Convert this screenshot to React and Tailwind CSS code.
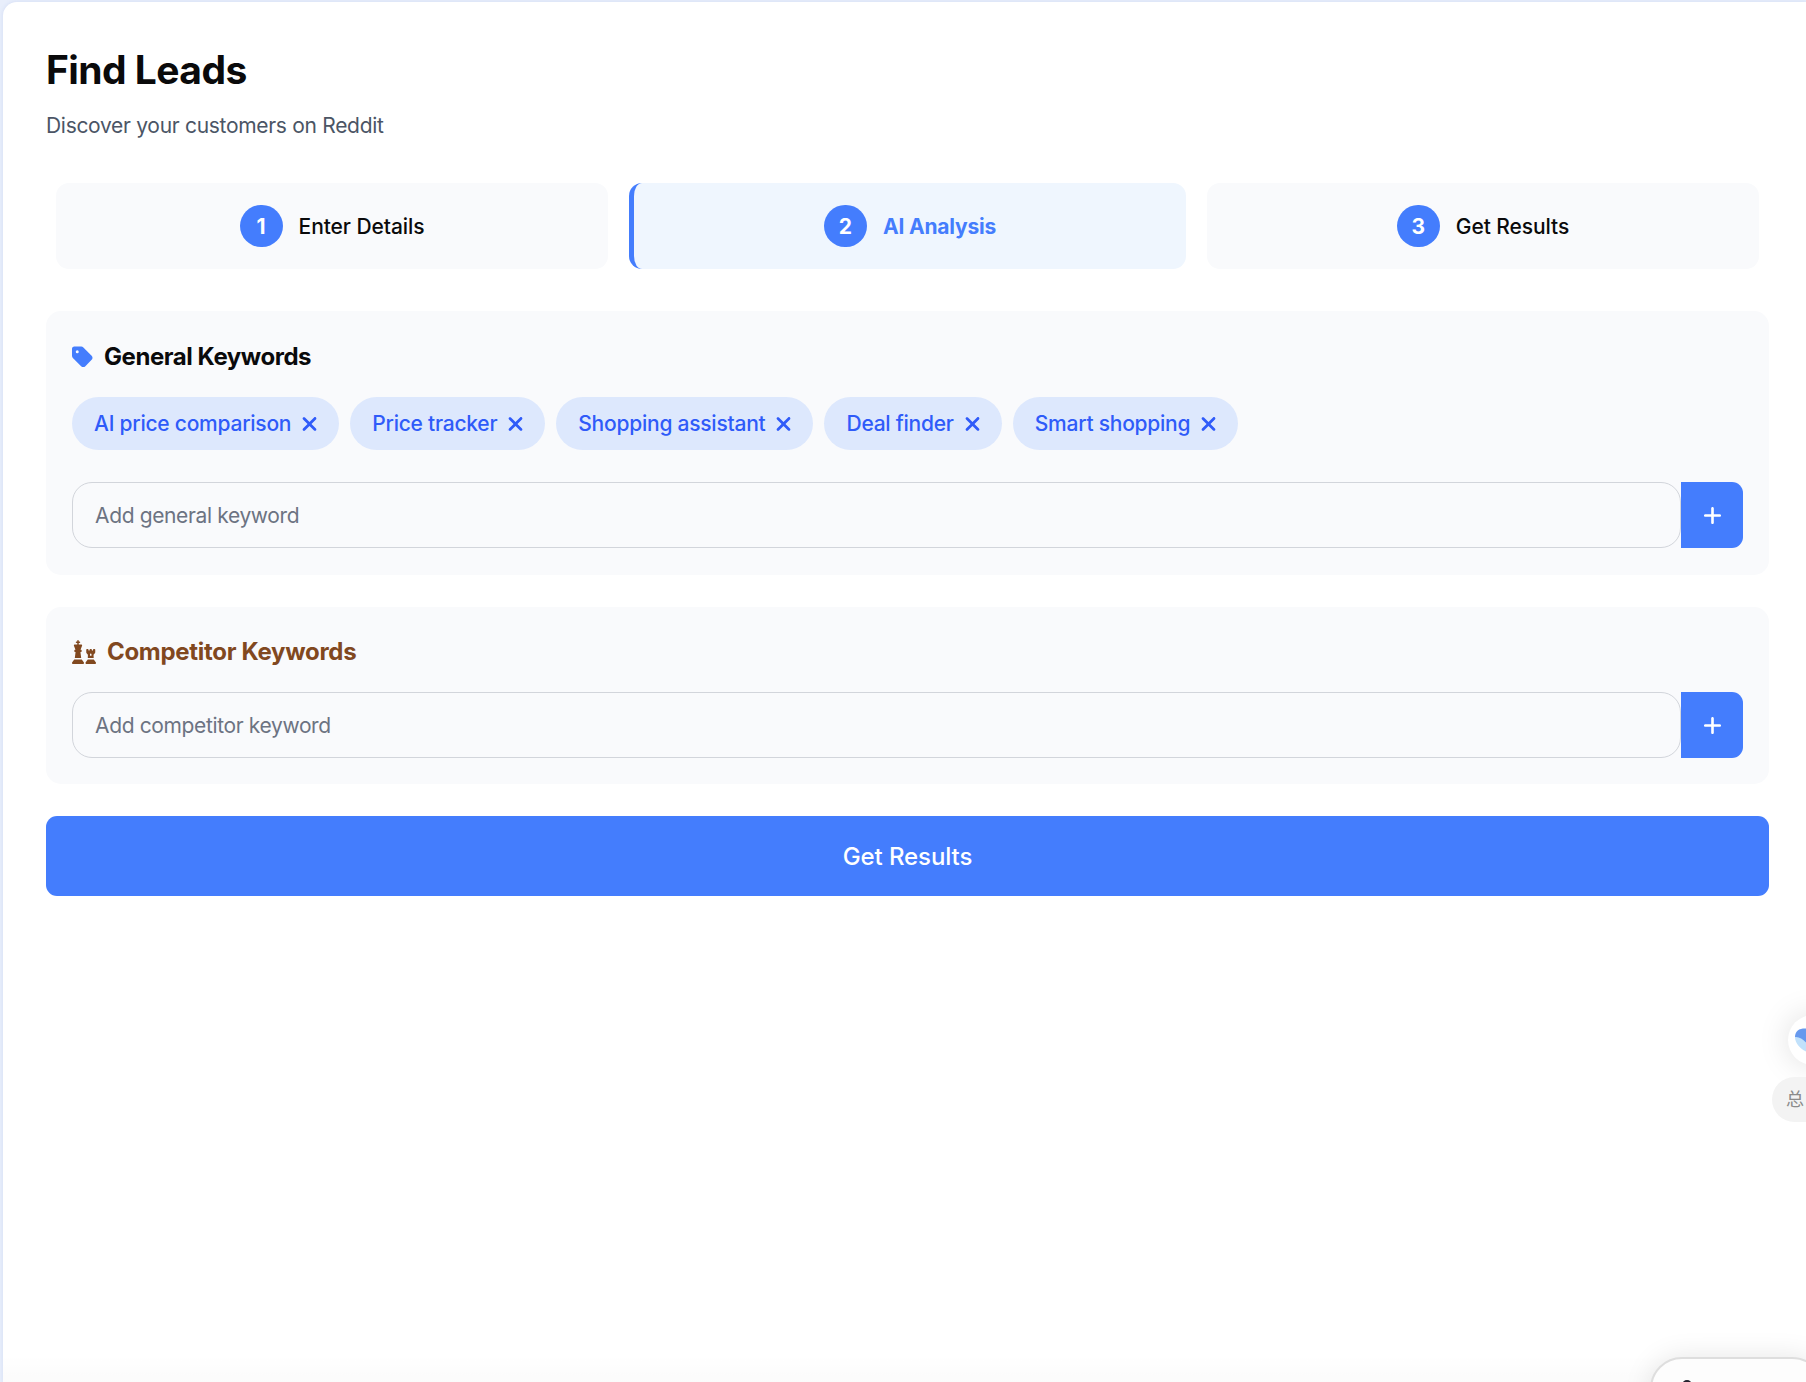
import { FaTag, FaPlus, FaXmark, FaChess } from 'react-icons/fa6'
import clsx from 'clsx'

const STEPS = [
  { id: 1, label: 'Enter Details' },
  { id: 2, label: 'AI Analysis' },
  { id: 3, label: 'Get Results' },
]

const CURRENT_STEP = 2

const GENERAL_KEYWORDS = [
  'AI price comparison',
  'Price tracker',
  'Shopping assistant',
  'Deal finder',
  'Smart shopping',
]

function Step({ id, label }) {
  const active = id === CURRENT_STEP
  return (
    <div
      className={clsx(
        'flex h-[86px] items-center justify-center gap-4 rounded-[13px]',
        active ? 'w-[557px] border-l-[5px] border-[#447dfd] bg-[#eff6fe]' : 'w-[552px] bg-[#f9fafc]'
      )}
    >
      <span className="flex h-[42px] w-[43px] items-center justify-center rounded-full bg-[#447dfd] pt-px text-[21px] font-bold text-white">
        {id}
      </span>
      <span
        className={clsx(
          'pt-0.5 text-[21px]',
          active ? 'font-bold tracking-[-0.2px] text-[#447dfd]' : 'font-medium tracking-[-0.08px] text-[#0a0a0b]'
        )}
      >
        {label}
      </span>
    </div>
  )
}

function Tag({ label }) {
  return (
    <span className="flex h-[53px] items-center gap-2.5 rounded-full bg-[#dde8fd] pr-[21px] pl-[22px] text-[21px] font-medium tracking-[-0.24px] text-[#2f5bf9]">
      {label}
      <button aria-label={`Remove ${label}`}>
        <FaXmark className="h-[22px] w-[17px]" />
      </button>
    </span>
  )
}

function KeywordInput({ placeholder }) {
  return (
    <div className="flex h-[66px]">
      <input
        className="min-w-0 flex-1 rounded-[20px] border border-[#d2d5db] bg-transparent px-[22px] pt-0.5 text-[21px] tracking-[-0.36px] text-[#0a0a0b] outline-none placeholder:text-[#6c7382]"
        placeholder={placeholder}
      />
      <button className="flex w-[62px] items-center justify-center rounded-r-[11px] bg-[#447dfd] text-white" aria-label="Add">
        <FaPlus className="h-[21px] w-[21px]" />
      </button>
    </div>
  )
}

export default function App() {
  return (
    <div className="relative h-[1382px] w-[1806px] overflow-hidden bg-[#e8eefb] pt-0.5 pl-[3px] font-['Inter','Noto_Sans_CJK_SC',sans-serif] text-[#0a0a0b]">
      <main className="h-[1380px] rounded-tl-[14px] bg-white pt-[43px] pr-[37px] pl-[43px] shadow-[0_0_4px_rgba(90,120,200,0.15)]">
        <h1 className="h-[50px] text-[39px] leading-[50px] font-bold tracking-[-0.55px]">Find Leads</h1>
        <p className="mt-[15px] h-8 text-[21px] leading-8 tracking-[-0.3px] text-[#4b5565]">Discover your customers on Reddit</p>

        {/* Progress */}
        <div className="mt-[41px] flex justify-between px-2.5">
          {STEPS.map(step => (
            <Step key={step.id} {...step} />
          ))}
        </div>

        {/* General keywords */}
        <section className="mt-[42px] h-[264px] rounded-[15px] bg-[#f9fafc] px-[26px] pt-[30px]">
          <h2 className="flex h-8 items-center gap-[11px] text-[24px] font-bold tracking-[-0.45px]">
            <FaTag className="h-6 w-[21px] text-[#447dfd]" />
            General Keywords
          </h2>
          <div className="mt-6 mb-8 flex gap-[11px]">
            {GENERAL_KEYWORDS.map(keyword => (
              <Tag key={keyword} label={keyword} />
            ))}
          </div>
          <KeywordInput placeholder="Add general keyword" />
        </section>

        {/* Competitor keywords */}
        <section className="mt-8 h-[177px] rounded-[15px] bg-[#f9fafc] px-[26px] pt-[29px]">
          <h2 className="mb-6 flex h-8 items-center gap-[11px] text-[24px] font-bold tracking-[-0.3px] text-[#81481f]">
            <FaChess className="h-6 w-6" />
            Competitor Keywords
          </h2>
          <KeywordInput placeholder="Add competitor keyword" />
        </section>

        <button className="mt-8 h-20 w-full rounded-[11px] bg-[#447dfd] pt-0.5 text-[24px] font-medium tracking-[-0.1px] text-white">
          Get Results
        </button>
      </main>

      {/* Page fade at the bottom */}
      <div className="absolute right-0 bottom-0 left-[3px] h-7 bg-linear-to-b from-transparent to-black/[0.015]" />

      {/* Floating assistant */}
      <div className="absolute top-[1015px] left-[1788px] flex h-[50px] w-[50px] items-center rounded-full bg-white pl-[7px] shadow-[0_0_32px_rgba(0,0,0,0.13)]">
        <svg viewBox="0 0 36 36" className="h-9 w-9">
          <path d="M0 15C0 9 4 6.500 10 6.500h20V26H12z" fill="#6799ee" />
          <path d="M0 15c4-.5 8 2 11.500 6l8 9H12C5 27 0 21 0 15z" fill="#c1e1fb" />
        </svg>
      </div>
      <div className="absolute top-[1077px] left-[1772px] flex h-[45px] w-20 items-center rounded-full bg-[#f3f3f3] pl-3.5 text-[18px] text-[#8b8b8b]">
        总
      </div>

      {/* Popup edge */}
      <div className="absolute top-[1357px] left-[1650px] h-20 w-[174px] rounded-[32px] border-2 border-[#dedede] bg-[#fdfdfd] shadow-[0_0_28px_rgba(0,0,0,0.1)]">
        <div className="mt-[21px] ml-[30px] h-5 w-2.5 rounded-full bg-[#25222e]" />
      </div>
    </div>
  )
}
